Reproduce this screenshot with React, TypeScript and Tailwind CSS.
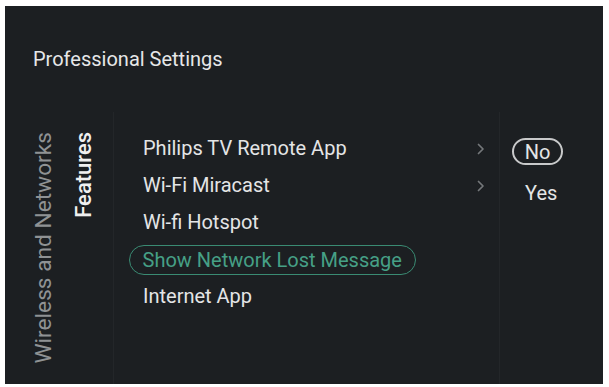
import React from "react";

const Chevron = () => (
  <svg width="8" height="12" viewBox="0 0 8 12" fill="none">
    <path d="M1.5 1.5 L6 6 L1.5 10.5" stroke="#74777a" strokeWidth="1.7" strokeLinecap="round" strokeLinejoin="round" />
  </svg>
);

const items = [
  { label: "Philips TV Remote App", chevron: true },
  { label: "Wi-Fi Miracast", chevron: true },
  { label: "Wi-fi Hotspot", chevron: false },
  { label: "Show Network Lost Message", chevron: false, selected: true },
  { label: "Internet App", chevron: false },
];

export default function App() {
  return (
    <div
      className="w-[609px] h-[387px] bg-white pl-[5px] pt-[6px] pr-[6px] pb-[3px]"
      style={{ fontFamily: "Roboto, 'Liberation Sans', sans-serif" }}
    >
      <div className="h-full bg-[#1c1f22] flex flex-col">
        <div className="h-[106px] pl-[28px] pt-[41px]">
          <div className="text-[20px] leading-[24px] text-[#e6e7e8]">Professional Settings</div>
        </div>
        <div className="flex flex-1">
          <div className="w-[108px] flex pl-[26px] gap-[14px] pt-[20px]">
            <div className="flex flex-col items-start">
              <span className="[writing-mode:vertical-rl] rotate-180 text-[22.7px] leading-[26px] text-[#8f9294] whitespace-nowrap">
                Wireless and Networks
              </span>
            </div>
            <div className="flex flex-col items-start">
              <span className="[writing-mode:vertical-rl] rotate-180 text-[22px] leading-[26px] font-medium text-[#f0f0f0] whitespace-nowrap">
                Features
              </span>
            </div>
          </div>
          <div className="flex-1 border-l border-r border-[#232629] pt-[18px] pl-[29px] pr-[14px]">
            {items.map((it) => (
              <div key={it.label} className="h-[37px] flex items-center justify-between">
                {it.selected ? (
                  <span className="ml-[-14.5px] h-[30px] inline-flex items-center px-[13px] border-[1.5px] border-[#3a8b73] rounded-full text-[20px] leading-[24px] text-[#46a086]">
                    {it.label}
                  </span>
                ) : (
                  <span className="text-[20px] leading-[37px] text-[#e4e5e6]">{it.label}</span>
                )}
                {it.chevron && <Chevron />}
              </div>
            ))}
          </div>
          <div className="w-[103px] flex flex-col items-start pt-[26px] pl-[12px]">
            <div className="w-[51px] h-[27px] rounded-full border-2 border-[#c8c9ca] flex items-center justify-center text-[20px] leading-[24px] text-[#e4e5e6]">
              No
            </div>
            <div className="mt-[16px] pl-[13px] text-[20px] leading-[24px] text-[#e4e5e6]">Yes</div>
          </div>
        </div>
      </div>
    </div>
  );
}
